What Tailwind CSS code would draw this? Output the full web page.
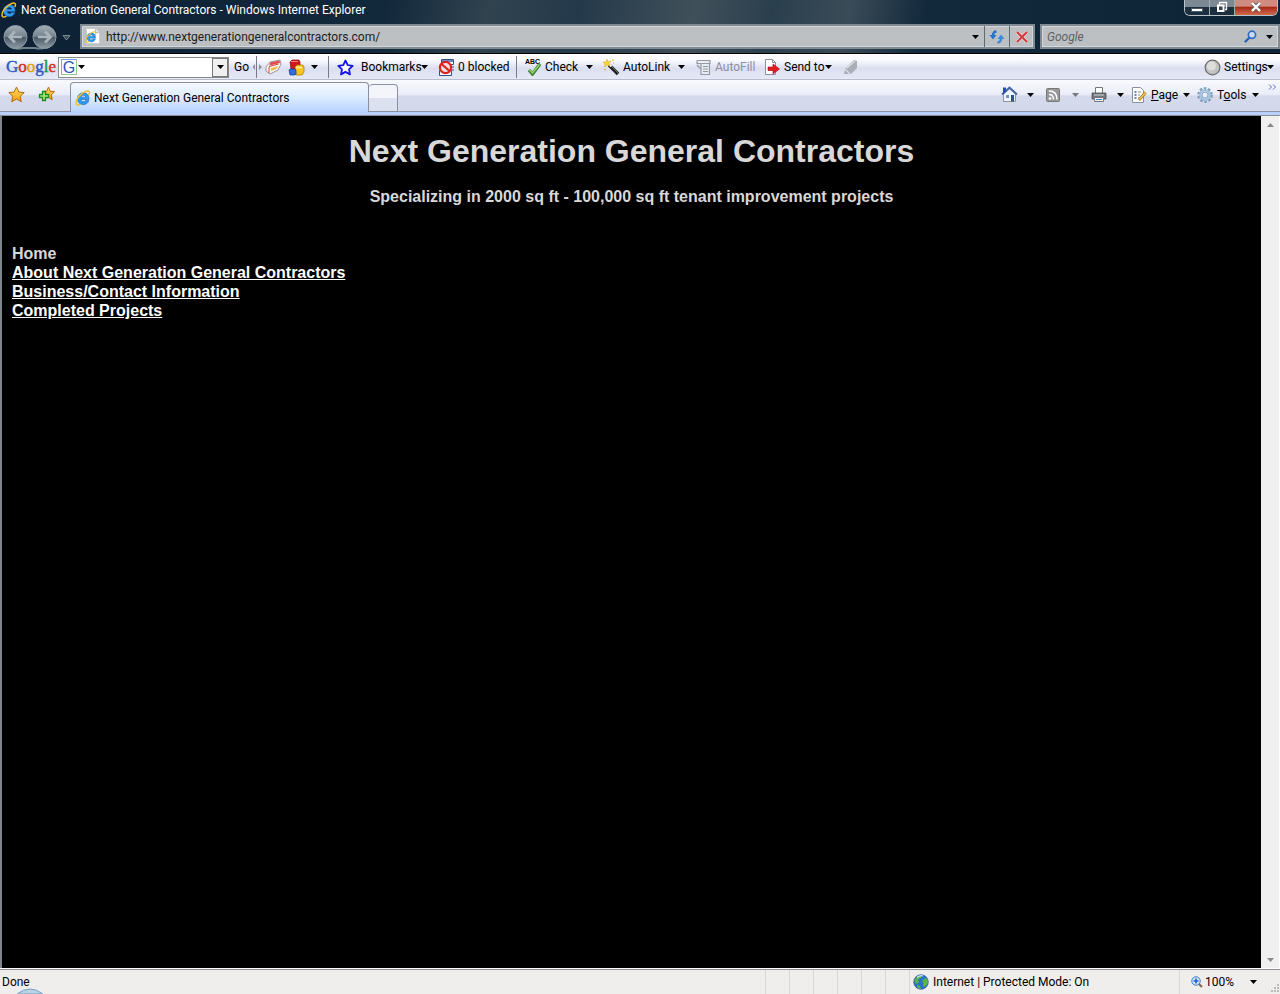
<!DOCTYPE html>
<html lang="en">
<head>
    <meta charset="UTF-8">
    <meta name="viewport" content="width=device-width, initial-scale=1.0">
    <title>Next Generation General Contractors - Windows Internet Explorer</title>
    <script src="https://cdn.jsdelivr.net/npm/@tailwindcss/browser@4"></script>
</head>
<body class="flex flex-col min-h-screen overflow-hidden bg-black text-black text-[12px] leading-4 font-[Roboto,'Open_Sans',sans-serif] whitespace-nowrap">

    <!-- Shared icons -->
    <svg class="absolute size-0">
        <symbol id="caret" viewBox="0 0 7 4"><path d="M0 0h7L3.500 4z" fill="currentColor"/></symbol>
        <symbol id="ie" viewBox="0 0 16 16">
            <path d="M14 9.500H6c.2 1.400 1.100 2.200 2.500 2.200 1 0 1.700-.4 2.100-1.100h3.200c-.8 2.600-2.700 4-5.300 4-3.600 0-6-2.400-6-5.900s2.500-6 6.100-6C12.200 2.700 14.300 5.300 14 9.500zM6 7.200h4.700c-.2-1.300-1-2-2.300-2S6.200 5.900 6 7.200z" fill="#2f9cf0" stroke="#1565b8" stroke-width=".6"/>
            <path d="M13.800 5c1-2.100.9-3.500-.3-3.900C10.900.4 5.400 4 2.700 8.200.7 11.300.5 14.200 2 14.900c.9.400 2.100 0 3.500-.8" fill="none" stroke="#f6bd24" stroke-width="1.500"/>
        </symbol>
        <linearGradient id="nav" x2="0" y2="1">
            <stop offset="0" stop-color="#a3aeb6"/><stop offset=".48" stop-color="#74828c"/><stop offset=".52" stop-color="#4a5964"/><stop offset="1" stop-color="#8e9ca6"/>
        </linearGradient>
        <linearGradient id="gold" x2="0" y2="1">
            <stop offset="0" stop-color="#ffe36b"/><stop offset="1" stop-color="#f79a0c"/>
        </linearGradient>
    </svg>

    <header class="shrink-0">
        <div class="bg-[linear-gradient(100deg,#0e2134_0%,#12283b_30%,#30434f_38%,#24394a_45%,#40505a_54%,#2a3f4d_60%,#3a4b57_66%,#12293c_72%,#0d2336_100%)] border-b border-black">
            <!-- Title bar -->
            <div class="flex items-start h-5 pl-px pr-[2px]">
                <svg class="size-4 mt-[2px]"><use href="#ie"/></svg>
                <h1 class="flex-1 pl-1 pt-[2px] text-white">Next Generation General Contractors - Windows Internet Explorer</h1>
                <div class="flex h-4 rounded-b-md border border-t-0 border-[#b9c3ca] overflow-hidden">
                    <button aria-label="Minimize" class="flex justify-center w-[25px] bg-linear-to-b from-[#7c8993] from-45% to-[#1d3040] to-50% border-r border-[#a0abb3]">
                        <svg class="w-3 h-4" viewBox="0 0 12 16"><path d="M.5 8.500h11v3H.5z" fill="#fff" stroke="#4b5963"/></svg>
                    </button>
                    <button aria-label="Restore" class="flex justify-center w-[25px] bg-linear-to-b from-[#7c8993] from-45% to-[#1d3040] to-50% border-r border-[#a0abb3]">
                        <svg class="w-3 h-4" viewBox="0 0 12 16"><path d="M3.500 5V2.500h7v7H9" fill="none" stroke="#fff" stroke-width="1.300"/><path d="M2 5.500h5.500V11H2z" fill="#35444f" stroke="#fff" stroke-width="2"/></svg>
                    </button>
                    <button aria-label="Close" class="flex justify-center w-[42px] bg-linear-to-b from-[#cf8b80] from-40% via-[#a82b16] via-50% to-[#d0694c]">
                        <svg class="w-3 h-4" viewBox="0 0 12 16"><path d="M2.500 3.500l7 7M9.500 3.500l-7 7" stroke="#58606a" stroke-width="4"/><path d="M2 3l8 8M10 3l-8 8" stroke="#fff" stroke-width="2.400"/></svg>
                    </button>
                </div>
            </div>

            <!-- Address bar -->
            <div class="flex items-center h-[33px] pl-[3px]">
                <svg class="w-[70px] h-7" viewBox="0 0 70 28">
                    <path d="M6 23q6 4 14 2h12q9 2 16-3" fill="none" stroke="#71818c" stroke-width="2"/>
                    <circle cx="12.500" cy="14" r="11.500" fill="url(#nav)" stroke="#8c9aa4"/>
                    <circle cx="41.500" cy="14" r="11.500" fill="url(#nav)" stroke="#8c9aa4"/>
                    <path d="M19 14H7m5-5.500L6.500 14l5.500 5.500M35 14h12m-5-5.500l5.500 5.500-5.500 5.500" fill="none" stroke="#a9b4bc" stroke-width="2.600"/>
                    <path d="M60 12.500h7L63.500 17z" fill="#3b4b58" stroke="#798893"/>
                </svg>
                <div class="flex flex-1 h-[25px] ml-[7px] border-2 border-[#7f8a92] bg-[#bcc0c3] shadow-[inset_0_0_0_1px_#d3d7da]">
                    <svg class="w-4 h-4 ml-[3px] mt-[2px]" viewBox="0 0 16 16"><path d="M1.500.5h9l4 4v11h-13z" fill="#fff" stroke="#c9ced3"/><path d="M10.500.5v4h4" fill="#dde3e8" stroke="#b6bec6"/><use href="#ie" x="0" y="3" width="12" height="12"/></svg>
                    <input type="text" aria-label="Address" value="http://www.nextgenerationgeneralcontractors.com/" class="flex-1 min-w-0 pl-[5px] text-[#1c1c1c] outline-none">
                    <button aria-label="Show addresses" class="grid place-items-center w-[17px]"><svg class="w-[7px] h-1"><use href="#caret"/></svg></button>
                    <button aria-label="Refresh" class="grid place-items-center w-[25px] border-l border-[#5f6b74]">
                        <svg class="size-4" viewBox="0 0 16 16"><path d="M7.500 2.500Q4 2.500 4 7" fill="none" stroke="#2673c8" stroke-width="2.400"/><path d="M.5 6h7L4 10.500z" fill="#2673c8"/><path d="M8.500 13.500Q12 13.500 12 9" fill="none" stroke="#3c8ade" stroke-width="2.400"/><path d="M8.500 10h7L12 5.500z" fill="#3c8ade"/></svg>
                    </button>
                    <button aria-label="Stop" class="grid place-items-center w-6 border-l border-[#5f6b74]">
                        <svg class="size-3" viewBox="0 0 12 12"><path d="M1 1l10 10M11 1L1 11" stroke="#f0d5d5" stroke-width="3.600"/><path d="M1 1l10 10M11 1L1 11" stroke="#d3383d" stroke-width="2"/></svg>
                    </button>
                </div>
                <div class="flex w-[240px] h-[25px] ml-[5px] border-2 border-[#7f8a92] bg-[#bcc0c3] shadow-[inset_0_0_0_1px_#d3d7da]">
                    <input type="text" aria-label="Search" placeholder="Google" class="flex-1 min-w-0 pl-[5px] italic placeholder:text-[#5d6266] outline-none">
                    <button aria-label="Search" class="grid place-items-center w-5">
                        <svg class="size-[13px]" viewBox="0 0 13 13"><path d="M6 7L1.500 11.500" stroke="#2a62b4" stroke-width="2.400" stroke-linecap="round"/><circle cx="8" cy="4.800" r="3.600" fill="#cfdcec" stroke="#2f6ec4" stroke-width="1.700"/></svg>
                    </button>
                    <button aria-label="Search options" class="grid place-items-center w-[18px]"><svg class="w-[7px] h-1"><use href="#caret"/></svg></button>
                </div>
            </div>
        </div>

        <!-- Google toolbar -->
        <div class="flex items-center h-[26px] pl-[6px] pr-[6px] border-t border-t-white border-b border-[#b9bccb] bg-linear-to-b from-[#fbfbff] from-20% via-[#dadff0] via-55% to-[#e6e9f6]">
            <button aria-label="Google" class="w-[52px] text-left font-['Liberation_Serif',serif] text-[17px] leading-5 [-webkit-text-stroke:0.4px]"><span class="text-[#2a56c6]">G</span><span class="text-[#d62d20]">o</span><span class="text-[#e0a500]">o</span><span class="text-[#2a56c6]">g</span><span class="text-[#17933b]">l</span><span class="text-[#d62d20]">e</span></button>
            <div class="flex items-center w-[171px] h-[21px] border border-[#8a8a8a] bg-white">
                <span class="grid place-items-center size-4 ml-[2px] border border-t-[#7c9bea] border-l-[#e08686] border-r-[#8fca8f] border-b-[#8fca8f] font-['Liberation_Sans',sans-serif] text-[16px] leading-none text-[#2c55b8]">G</span>
                <svg class="w-[7px] h-1 ml-px"><use href="#caret"/></svg>
                <input type="text" aria-label="Google search" class="flex-1 min-w-0 h-4 outline-none">
                <button aria-label="Search history" class="grid place-items-center w-4 h-[19px] border border-[#777] bg-[#f0f0f0]"><svg class="w-[7px] h-1"><use href="#caret"/></svg></button>
            </div>
            <button class="w-6 pl-[5px] text-left">Go</button>
            <svg class="w-[10px] h-[22px]" viewBox="0 0 10 22"><path d="M3.500 0v22" stroke="#777b88"/><path d="M2 8v6L-.5 11zM6 8v6L9 11z" fill="#8d91a0"/></svg>
            <button aria-label="Highlighter" class="w-[18px] ml-[2px]">
                <svg class="w-[17px] h-4" viewBox="0 0 17 16"><path d="M1 8L5 3l10-2 1 4-3 6-8 4-4-3z" fill="#fbf6f2" stroke="#999"/><path d="M5 3.500L14.500 1.500 15 4 4.500 6.500z" fill="#e5484e"/><path d="M6 9l7-2-1.500 3L6 12z" fill="#f2bd4f"/><path d="M4 7.500l9.500-2.500M4 8v6" stroke="#cc4040"/></svg>
            </button>
            <button aria-label="Buttons gallery" class="flex items-center w-[35px] ml-[5px]">
                <svg class="w-[17px] h-[17px]" viewBox="0 0 17 17"><path d="M2 3l2-2h7l1 2v7H3z" fill="#d5131a" stroke="#8c0d10" stroke-width=".7"/><path d="M3 2.500h7" stroke="#ff8080"/><path d="M7 8l2-2h6l1 2v5l-2 3H8z" fill="#fbc521" stroke="#a97700" stroke-width=".7"/><path d="M8 8.500h6" stroke="#fff09b" stroke-width="1.500"/><path d="M1 11l1-1h5l1 1v4l-1 1H2z" fill="#2d6fe0" stroke="#123f97" stroke-width=".7"/></svg>
                <svg class="w-[7px] h-1 ml-[6px]"><use href="#caret"/></svg>
            </button>
            <div class="w-px h-[22px] ml-[5px] bg-[#777b88]"></div>
            <button class="flex items-center w-[101px] ml-2">
                <svg class="size-[17px] mr-[7px]" viewBox="0 0 17 17"><path d="M8.500 1.500l2.200 4.700 5 .6-3.700 3.500 1 5.100-4.500-2.500-4.500 2.500 1-5.100L1.300 6.800l5-.6z" fill="#fff" stroke="#1515e6" stroke-width="1.800" stroke-linejoin="round"/></svg>
                <span class="w-[60px] text-left">Bookmarks</span>
                <svg class="w-[7px] h-1 shrink-0"><use href="#caret"/></svg>
            </button>
            <button class="flex items-center w-[78px]">
                <svg class="size-[17px] mr-[3px] shrink-0" viewBox="0 0 17 17"><path d="M3.500.5h12v5h-12zM1.500 11.500h12v5h-12z" fill="#fff" stroke="#35517e"/><path d="M4 1h11v2H4z" fill="#6289c5"/><circle cx="7.500" cy="8.500" r="5.600" fill="#fbdcdc" stroke="#de2222" stroke-width="2.200"/><path d="M3.500 5l8 7" stroke="#de2222" stroke-width="2.200"/><path d="M14 8h2M14 11h2" stroke="#35517e"/></svg>
                <span>0 blocked</span>
            </button>
            <div class="w-px h-[22px] bg-[#777b88]"></div>
            <button class="flex items-center w-[78px] ml-2">
                <svg class="w-[18px] h-[18px] mr-[2px]" viewBox="0 0 18 18"><text x="0" y="6" font-size="7" font-weight="700" font-family="Liberation Sans, sans-serif">ABC</text><path d="M4 12l3.500 4L15 6" fill="none" stroke="#3f7f31" stroke-width="3.400"/><path d="M4.500 12l3 3L14.500 6.500" fill="none" stroke="#93d668" stroke-width="1.500"/></svg>
                <span class="w-[41px] text-left">Check</span>
                <svg class="w-[7px] h-1"><use href="#caret"/></svg>
            </button>
            <button class="flex items-center w-[93px]">
                <svg class="w-[17px] h-[17px] mr-[3px]" viewBox="0 0 17 17"><path d="M6 6l9 9" stroke="#222" stroke-width="3.600"/><path d="M6.500 5.500l2 2" stroke="#fff" stroke-width="2"/><path d="M9 8l6 6" stroke="#777" stroke-width=".8"/><path d="M4 0l1 3 3-1-2 2.500L7 7 4 6 1.500 8 2 5 0 3l3 0z" fill="#ffd52e" stroke="#c79b14" stroke-width=".4"/><path d="M9 1h1.500M1 10.500h1.500M10 4h1" stroke="#d4a514"/></svg>
                <span class="w-[55px] text-left">AutoLink</span>
                <svg class="w-[7px] h-1"><use href="#caret"/></svg>
            </button>
            <button class="flex items-center w-[68px] text-[#8e919c]" disabled>
                <svg class="w-4 h-4 mr-[3px]" viewBox="0 0 16 16"><path d="M1 1.500h13v3H5v11H13.500V5M1 1.500v3h4" fill="#e9ebf3" stroke="#9599a5" stroke-width="1.200"/><path d="M7 7.500h5M7 10h5M7 12.500h5" stroke="#9599a5"/><path d="M1 6l4 4" stroke="#a7abb6" stroke-width="2"/></svg>
                <span>AutoFill</span>
            </button>
            <button class="flex items-center w-[79px]">
                <svg class="w-4 h-4 mr-1" viewBox="0 0 16 16"><path d="M1.500.5h7l3 3v12h-10z" fill="#fff" stroke="#8a8f9b"/><path d="M8.500.5v3h3" fill="none" stroke="#8a8f9b"/><path d="M4 8h5V5l6.500 5L9 15v-3.500H4z" fill="#e21a22" stroke="#9b0b10" stroke-width=".6"/></svg>
                <span class="w-[41px] text-left">Send to</span>
                <svg class="w-[7px] h-1"><use href="#caret"/></svg>
            </button>
            <button aria-label="Highlight" class="w-4" disabled>
                <svg class="w-4 h-4" viewBox="0 0 16 16"><path d="M1 15l1-5 9-9 3 1v7l-6 6z" fill="#a9adb6"/><path d="M2 10l5 5M4 9l8-7" stroke="#dfe1e8" stroke-width="1.200"/></svg>
            </button>
            <button class="flex items-center ml-auto">
                <svg class="w-[17px] h-[17px] mr-[3px]" viewBox="0 0 17 17"><circle cx="8.500" cy="8.500" r="7.300" fill="#c3c3c1" stroke="#6c6c6c" stroke-width="1.200"/><circle cx="7.500" cy="7" r="4.500" fill="#dededc"/></svg>
                <span class="w-[43px] text-left">Settings</span>
                <svg class="w-[7px] h-1"><use href="#caret"/></svg>
            </button>
        </div>

        <!-- Tabs and command bar -->
        <div class="flex items-end h-[32px] bg-linear-to-b from-[#f9faff] via-[#eaedf7] via-45% to-[#d4daec] to-50%">
            <div class="flex items-center gap-[13px] w-[70px] h-[31px] pl-2 pb-[3px] border-b border-[#9094a6]">
                <button aria-label="Favorites Center"><svg class="size-[17px]" viewBox="0 0 17 17"><path d="M8.500 1l2.300 5 5.400.6-4 3.700 1.100 5.400-4.800-2.700-4.800 2.700 1.100-5.400-4-3.700 5.400-.6z" fill="url(#gold)" stroke="#b8690b"/></svg></button>
                <button aria-label="Add to Favorites"><svg class="size-[17px]" viewBox="0 0 17 17"><path d="M10.500 1l1.600 4.200 4.400.5-3.300 3.200 1 4.800-3.900-2.300L5 13V5.500l3.800-.4z" fill="url(#gold)" stroke="#b8690b"/><path d="M4.500 5.500h3v3h3v3h-3v3h-3v-3h-3v-3h3z" fill="#9be879" stroke="#238a1d" stroke-width="1.300"/></svg></button>
            </div>
            <div class="flex items-center w-[299px] h-[30px] pl-[4px] rounded-t-[4px] border border-b-0 border-[#8a90a3] bg-linear-to-b from-[#f4f9ff] via-[#dcecff] via-50% to-[#b7d3ff]">
                <svg class="size-4 shrink-0"><use href="#ie"/></svg>
                <a href="#" class="pl-[3px]">Next Generation General Contractors</a>
            </div>
            <button aria-label="New Tab" class="w-[29px] h-[28px] border border-l-0 border-[#8a90a3] rounded-t-[4px] bg-linear-to-b from-[#f4f5fb] from-50% to-[#dce1f0] to-50%"></button>
            <div class="flex flex-1 items-center justify-end h-[31px] pb-[3px] border-b border-[#9094a6]">
                <button aria-label="Home" class="flex items-center w-[44px]">
                    <svg class="w-[17px] h-[17px] mr-[9px]" viewBox="0 0 17 17"><path d="M2.500 8v7.500h12V8L8.500 3z" fill="#f2f5f9" stroke="#8895a6"/><path d="M1 8.500L8.500 1.500 16 8.500" fill="none" stroke="#4866a8" stroke-width="2"/><path d="M2 1.500h3v4L2 8z" fill="#2748d2"/><path d="M10 9h3v6.500h-3z" fill="#2c5092"/><path d="M5 9h3v3H5z" fill="#6a95c9"/></svg>
                    <svg class="w-[7px] h-1"><use href="#caret"/></svg>
                </button>
                <button aria-label="Feeds" class="flex items-center w-[46px] text-[#777]">
                    <svg class="w-4 h-4 mr-[11px]" viewBox="0 0 16 16"><rect x="1.500" y="1.500" width="13" height="13" rx="1" fill="#999" stroke="#777"/><circle cx="5" cy="11.500" r="1.300" fill="#fff"/><path d="M4 7.500q4.500 0 4.500 5M4 4q8 0 8 8.500" fill="none" stroke="#fff" stroke-width="1.500"/></svg>
                    <svg class="w-[7px] h-1"><use href="#caret"/></svg>
                </button>
                <button aria-label="Print" class="flex items-center w-[40px]">
                    <svg class="w-4 h-4 mr-[10px]" viewBox="0 0 16 16"><path d="M4.500.5h7v6h-7z" fill="#fff" stroke="#777"/><path d="M1 6h14v6H1z" fill="#74777c" stroke="#4b4d50" stroke-width=".8"/><path d="M3 8h10" stroke="#d3d5d8"/><path d="M3.500 10.500h9v4h-9z" fill="#f0f4f8" stroke="#777"/><path d="M5 12.500h6" stroke="#4a7fc3"/></svg>
                    <svg class="w-[7px] h-1"><use href="#caret"/></svg>
                </button>
                <button class="flex items-center w-[66px]">
                    <svg class="w-4 h-4 mr-[4px] shrink-0" viewBox="0 0 16 16"><path d="M1.500.5h8l3 3v12h-11z" fill="#fff" stroke="#8a8f9b"/><path d="M3.500 5h2M3.500 8h2M3.500 11h2" stroke="#3462b1" stroke-width="1.500"/><path d="M7 5h3M7 8h2M7 11h1" stroke="#888"/><path d="M14.500 5.500L8 13" stroke="#a7741c" stroke-width="2.800"/><path d="M14.500 5.500L8.500 12.500" stroke="#f4c64e" stroke-width="1.500"/></svg>
                    <span class="w-[32px] text-left"><u>P</u>age</span>
                    <svg class="w-[7px] h-1"><use href="#caret"/></svg>
                </button>
                <button class="flex items-center w-[71px]">
                    <svg class="w-4 h-4 mr-[4px] shrink-0" viewBox="0 0 16 16"><circle cx="8" cy="8" r="6.500" fill="none" stroke="#7f9db9" stroke-width="2.600" stroke-dasharray="2.500 1.600"/><circle cx="8" cy="8" r="4.700" fill="#f2f6fb" stroke="#a4c1dc" stroke-width="2.600"/><circle cx="8" cy="8" r="3" fill="#e9edf7" stroke="#7295b7" stroke-width=".8"/></svg>
                    <span class="w-[35px] text-left">T<u>o</u>ols</span>
                    <svg class="w-[7px] h-1"><use href="#caret"/></svg>
                </button>
                <button aria-label="More commands" class="self-start w-[12px] pt-[3px]"><svg class="w-2 h-[6px]" viewBox="0 0 8 6"><path d="M1 .5L3.500 3 1 5.500M5 .5L7.500 3 5 5.500" fill="none" stroke="#5b6bc0"/></svg></button>
            </div>
        </div>
        <div class="h-1 border-b border-[#8b8e93] bg-[#b9cffb]"></div>
    </header>

    <!-- Page -->
    <div class="flex flex-1 border-l-2 border-[#80868b] font-['Liberation_Sans',Arial,sans-serif] text-[16px] leading-[19px] font-bold">
        <main class="flex-1 px-[10px] pt-[15px] bg-black text-[#d8d8d8]">
            <h2 class="text-center text-[32px] leading-10">Next Generation General Contractors</h2>
            <p class="mt-4 text-center">Specializing in 2000 sq ft - 100,000 sq ft tenant improvement projects</p>
            <nav class="flex flex-col items-start mt-[38px]">
                <span>Home</span>
                <a href="#" class="text-white underline">About Next Generation General Contractors</a>
                <a href="#" class="text-white underline">Business/Contact Information</a>
                <a href="#" class="text-white underline">Completed Projects</a>
            </nav>
        </main>
        <div class="flex flex-col justify-between items-center w-[19px] py-[7px] bg-[#f0f0f1] border-r border-white text-[#8a8a8a]">
            <svg class="w-[7px] h-1 rotate-180"><use href="#caret"/></svg>
            <svg class="w-[7px] h-1"><use href="#caret"/></svg>
        </div>
    </div>

    <!-- Status bar -->
    <footer class="shrink-0 flex items-center h-[25px] border-t border-[#8d8f92] bg-[#f0eded] shadow-[0_-1px_0_#ffffff]">
        <div class="relative flex-1 pl-[2px]">Done
            <svg class="absolute left-[14px] top-[14px] w-8 h-[6px]" viewBox="0 0 32 6"><path d="M3 6Q16-4 29 6z" fill="#b9d2e4" stroke="#7ba3bd"/></svg>
        </div>
        <div class="flex self-stretch">
            <div class="w-6 border-l border-[#dcd8d8]"></div>
            <div class="w-6 border-l border-[#dcd8d8]"></div>
            <div class="w-6 border-l border-[#dcd8d8]"></div>
            <div class="w-6 border-l border-[#dcd8d8]"></div>
            <div class="w-6 border-l border-[#dcd8d8]"></div>
            <div class="w-6 border-l border-[#dcd8d8]"></div>
            <div class="flex items-center w-[270px] pl-[3px] border-l border-[#dcd8d8]">
                <svg class="w-4 h-4 mr-[4px]" viewBox="0 0 16 16"><circle cx="8" cy="8" r="7.300" fill="#2b6fd0" stroke="#1d4a8d" stroke-width=".6"/><path d="M2 5q3-4 7-3.500L8 4 5 5.500 6 8l-2 2-2.500-2zM9 7l3-3 2.500 1 .5 4-3 4-2-1 .500-3zM4 11l3 1 1 3q-3-.5-4-2z" fill="#58b83d"/><path d="M4 3.500q3-2.500 6-1.500" stroke="#cfe6ff" stroke-width="1.200" fill="none"/></svg>
                <span>Internet | Protected Mode: On</span>
            </div>
            <div class="flex items-center w-[101px] pl-[11px] border-l border-[#dcd8d8]">
                <button class="flex items-center w-[59px]">
                    <svg class="w-3 h-3 mr-[2px] shrink-0" viewBox="0 0 12 12"><path d="M7.500 7.500L11 11" stroke="#8b6b4e" stroke-width="2.200"/><circle cx="5" cy="5" r="4.200" fill="#d6e9fb" stroke="#3c78bc"/><path d="M5 2.500v5M2.500 5h5" stroke="#1860c8" stroke-width="1.600"/></svg>
                    <span>100%</span>
                </button>
                <button aria-label="Change zoom level"><svg class="w-[7px] h-1"><use href="#caret"/></svg></button>
                <svg class="self-end w-[10px] h-[10px] ml-auto mb-px" viewBox="0 0 10 10"><path d="M7 1h2v2H7zM4 4h2v2H4zM7 4h2v2H7zM1 7h2v2H1zM4 7h2v2H4zM7 7h2v2H7z" fill="#bdb9b9"/></svg>
            </div>
        </div>
    </footer>
</body>
</html>
